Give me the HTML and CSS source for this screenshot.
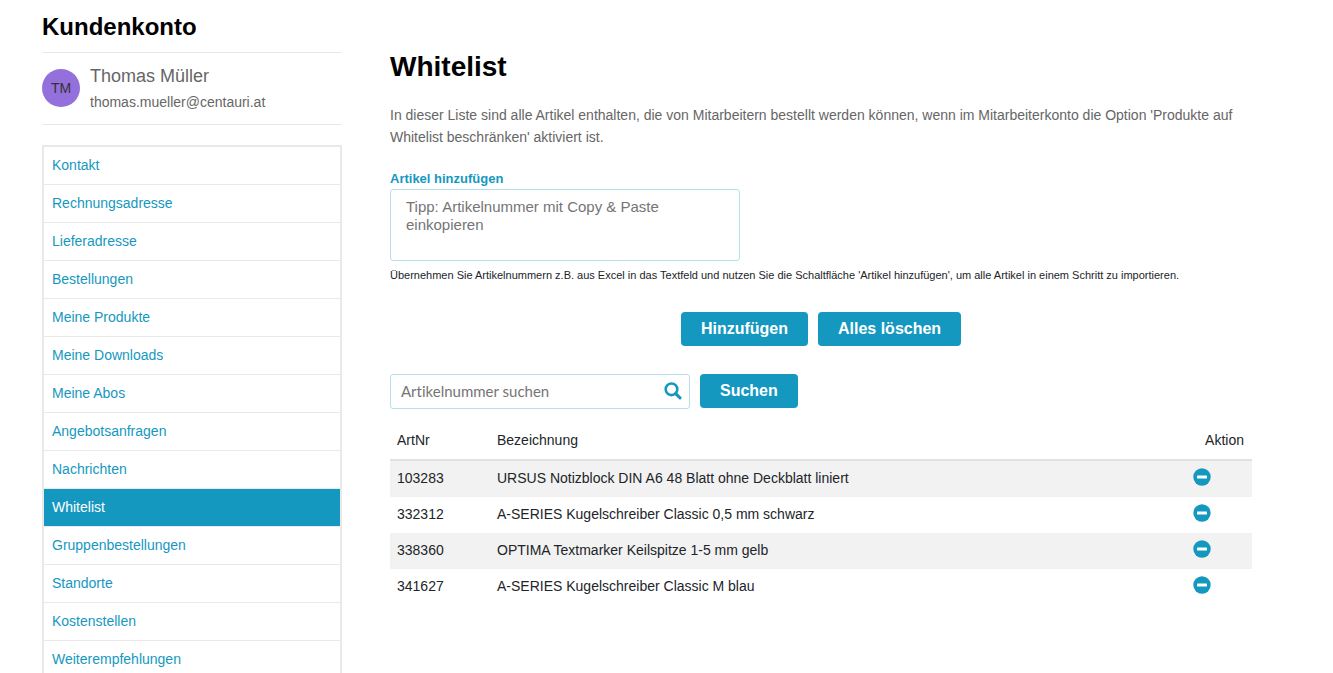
FILE: index.html
```html
<!DOCTYPE html>
<html lang="de">
<head>
<meta charset="utf-8">
<meta name="viewport" content="width=device-width, initial-scale=1">
<title>Kundenkonto – Whitelist</title>
<link rel="stylesheet" href="styles.css">
</head>
<body>
<svg class="sprite" aria-hidden="true">
  <symbol id="minus" viewBox="0 0 18 18">
    <circle cx="9" cy="9" r="8.7" fill="#1598c0"/>
    <rect x="4" y="7.6" width="10" height="2.8" rx=".3" fill="#fff"/>
  </symbol>
</svg>
<div class="page">
  <aside class="sidebar">
    <h2 class="sidebar-title">Kundenkonto</h2>
    <div class="user">
      <span class="avatar">TM</span>
      <div class="user-info">
        <div class="user-name">Thomas Müller</div>
        <div class="user-mail">thomas.mueller@centauri.at</div>
      </div>
    </div>
    <nav class="menu">
      <a class="menu-item" href="#">Kontakt</a>
      <a class="menu-item" href="#">Rechnungsadresse</a>
      <a class="menu-item" href="#">Lieferadresse</a>
      <a class="menu-item" href="#">Bestellungen</a>
      <a class="menu-item" href="#">Meine Produkte</a>
      <a class="menu-item" href="#">Meine Downloads</a>
      <a class="menu-item" href="#">Meine Abos</a>
      <a class="menu-item" href="#">Angebotsanfragen</a>
      <a class="menu-item" href="#">Nachrichten</a>
      <a class="menu-item active" href="#" aria-current="page">Whitelist</a>
      <a class="menu-item" href="#">Gruppenbestellungen</a>
      <a class="menu-item" href="#">Standorte</a>
      <a class="menu-item" href="#">Kostenstellen</a>
      <a class="menu-item" href="#">Weiterempfehlungen</a>
    </nav>
  </aside>
  <main class="content">
    <h1 class="title">Whitelist</h1>
    <p class="intro">In dieser Liste sind alle Artikel enthalten, die von Mitarbeitern bestellt werden können, wenn im Mitarbeiterkonto die Option 'Produkte auf Whitelist beschränken' aktiviert ist.</p>
    <label class="field-label" for="articles">Artikel hinzufügen</label>
    <textarea class="articles" id="articles" placeholder="Tipp: Artikelnummer mit Copy &amp; Paste einkopieren"></textarea>
    <p class="hint">Übernehmen Sie Artikelnummern z.B. aus Excel in das Textfeld und nutzen Sie die Schaltfläche 'Artikel hinzufügen', um alle Artikel in einem Schritt zu importieren.</p>
    <div class="actions">
      <button class="btn" type="button">Hinzufügen</button>
      <button class="btn" type="button">Alles löschen</button>
    </div>
    <form class="search">
      <div class="search-box">
        <input class="search-input" type="text" placeholder="Artikelnummer suchen" aria-label="Artikelnummer suchen">
        <svg class="search-icon" viewBox="0 0 18 18" aria-hidden="true"><circle cx="7.5" cy="7.3" r="5.8" fill="none" stroke="#1598c0" stroke-width="2.6"/><path d="M11.7 11.6 16 15.9" stroke="#1598c0" stroke-width="3" stroke-linecap="round"/></svg>
      </div>
      <button class="btn" type="button">Suchen</button>
    </form>
    <table class="list">
      <thead>
        <tr><th class="col-nr">ArtNr</th><th>Bezeichnung</th><th class="col-action">Aktion</th></tr>
      </thead>
      <tbody>
        <tr><td>103283</td><td>URSUS Notizblock DIN A6 48 Blatt ohne Deckblatt liniert</td><td class="cell-action"><button class="remove" type="button" aria-label="103283 entfernen"><svg class="remove-icon"><use href="#minus"/></svg></button></td></tr>
        <tr><td>332312</td><td>A-SERIES Kugelschreiber Classic 0,5 mm schwarz</td><td class="cell-action"><button class="remove" type="button" aria-label="332312 entfernen"><svg class="remove-icon"><use href="#minus"/></svg></button></td></tr>
        <tr><td>338360</td><td>OPTIMA Textmarker Keilspitze 1-5 mm gelb</td><td class="cell-action"><button class="remove" type="button" aria-label="338360 entfernen"><svg class="remove-icon"><use href="#minus"/></svg></button></td></tr>
        <tr><td>341627</td><td>A-SERIES Kugelschreiber Classic M blau</td><td class="cell-action"><button class="remove" type="button" aria-label="341627 entfernen"><svg class="remove-icon"><use href="#minus"/></svg></button></td></tr>
      </tbody>
    </table>
  </main>
</div>
</body>
</html>
```
FILE: styles.css
```css
*, *::before, *::after { box-sizing: border-box; }

html { scrollbar-width: none; }

body {
  margin: 0;
  background: #fff;
  color: #212529;
  font: 14px/22px "Liberation Sans", Arial, sans-serif;
}

.sprite { display: none; }

.page {
  display: grid;
  grid-template-columns: 300px minmax(0, 1fr);
  column-gap: 48px;
  padding: 0 81px 0 42px;
}

/* Sidebar */
.sidebar-title {
  margin: 0;
  padding: 12px 0 10px;
  border-bottom: 1px solid #e9e9e9;
  color: #000;
  font-size: 24px;
  line-height: 30px;
}

.user {
  display: flex;
  align-items: center;
  gap: 10px;
  margin-bottom: 20px;
  padding: 9px 0 10px;
  border-bottom: 1px solid #e9e9e9;
  color: #666;
}

.avatar {
  display: flex;
  align-items: center;
  justify-content: center;
  width: 38px;
  height: 38px;
  border-radius: 50%;
  background: #9370db;
  color: #333;
}

.user-name { font-size: 18px; line-height: 29px; }
.user-mail { line-height: 23px; }

.menu { border: 2px solid #e9e9e9; }

.menu-item {
  display: block;
  padding: 7px 8px 8px;
  border-bottom: 1px solid #e9e9e9;
  color: #1598c0;
  text-decoration: none;
}

.menu-item.active {
  background: #1598c0;
  background-clip: padding-box;
  color: #fff;
}

/* Content */
.content { padding-top: 49px; }

.title {
  margin: 0 0 19px;
  color: #000;
  font-size: 28px;
  line-height: 36px;
}

.intro {
  margin: 0 0 20px;
  color: #666;
}

.field-label {
  display: block;
  color: #1598c0;
  font-size: 13px;
  font-weight: 700;
  line-height: 21px;
}

.articles {
  display: block;
  width: 350px;
  max-width: 100%;
  height: 72px;
  padding: 8px 15px;
  border: 1px solid #b5dfea;
  border-radius: 3px;
  font: 15px/18px "Liberation Sans", Arial, sans-serif;
  resize: none;
}

.articles::placeholder,
.search-input::placeholder { color: #757575; opacity: 1; }

.hint {
  margin: 6px 0 29px;
  font-size: 11px;
  line-height: 16px;
}

.actions {
  display: flex;
  justify-content: center;
  gap: 10px;
}

.btn {
  height: 34px;
  padding: 0 20px;
  border: 0;
  border-radius: 4px;
  background: #1598c0;
  color: #fff;
  font: 700 16px/20px "Liberation Sans", Arial, sans-serif;
}

.search {
  display: flex;
  gap: 10px;
  margin: 28px 0 12px;
}

.search-box {
  display: flex;
  align-items: center;
  width: 300px;
  height: 35px;
  padding: 0 7px 1px 10px;
  border: 1px solid #b5dfea;
  border-radius: 3px;
}

.search-input {
  flex: 1;
  min-width: 0;
  padding: 0;
  border: 0;
  outline: 0;
  background: none;
  font: 15px/20px Lato, sans-serif;
  font-variant-ligatures: none;
}

.search-icon { width: 18px; height: 18px; }

.list {
  width: 100%;
  border-collapse: separate;
  border-spacing: 0;
}

.list th {
  padding: 8px 7px;
  border-bottom: 2px solid #dee2e6;
  font-weight: 400;
  text-align: left;
}

.list td { padding: 6px 7px 8px; }

.list tbody tr:nth-child(odd) { background: #f2f2f2; }

.list .col-nr { width: 100px; }
.list .col-action { width: 100px; padding-right: 8px; text-align: right; }
.list .cell-action { padding: 2px 41px 6px 0; text-align: right; }

.remove {
  display: block;
  margin-left: auto;
  padding: 0;
  border: 0;
  background: none;
}

.remove-icon { display: block; width: 18px; height: 18px; }
```
